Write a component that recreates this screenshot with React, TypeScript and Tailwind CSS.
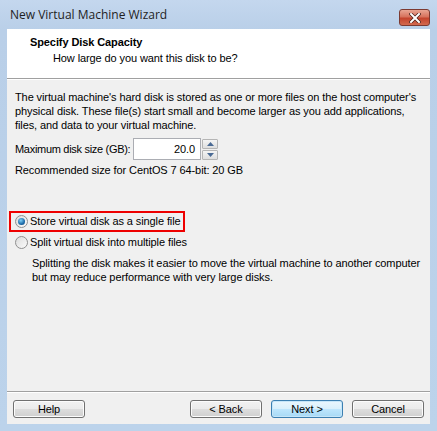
import React from 'react'

const body = "font-['Liberation_Sans',Arial,sans-serif] text-[11px] tracking-[-0.1px] text-black"

const Radio = ({ checked }: { checked?: boolean }) => (
  <span className="relative w-[13px] h-[13px] rounded-full border border-[#8f8f8f] bg-gradient-to-br from-[#dcdcdc] to-[#fbfbfb] flex items-center justify-center shrink-0">
    {checked && (
      <span className="w-[7px] h-[7px] rounded-full bg-[radial-gradient(circle_at_40%_35%,#7fd0f6,#1b6aa8_60%,#0c3f73)]" />
    )}
  </span>
)

const Btn = ({ label, primary }: { label: string; primary?: boolean }) => (
  <button
    className={
      'w-[72px] h-[18px] rounded-[3px] border flex items-center justify-center text-[11px] ' +
      (primary
        ? 'border-[#3c7fb1] bg-[linear-gradient(#eaf6fd,#d9f0fc_50%,#bee6fd_50%,#a7d9f5)] shadow-[inset_0_0_0_1px_#c6e6f9]'
        : 'border-[#707070] bg-[linear-gradient(#f2f2f2,#ebebeb_50%,#dddddd_50%,#cfcfcf)] shadow-[inset_0_0_0_1px_#fcfcfc]')
    }
  >
    {label}
  </button>
)

const Arrow = ({ up }: { up?: boolean }) => (
  <svg width="7" height="4" viewBox="0 0 7 4">
    <path d={up ? 'M0 4 L3.5 0 L7 4 Z' : 'M0 0 L3.5 4 L7 0 Z'} fill="#4a6a94" />
  </svg>
)

export default function App() {
  return (
    <div className="w-[437px] h-[431px] bg-[linear-gradient(#c4d7ee,#b9cfe8_30px,#bcd3eb)] flex flex-col overflow-hidden">
      {/* title bar */}
      <div className="h-[29px] flex items-start justify-between pl-[10px] pr-[7px]">
        <span className="mt-[6px] font-['Open_Sans',sans-serif] text-[12px] text-[#1e1e1e]">New Virtual Machine Wizard</span>
        <div className="mt-[9px] w-[31px] h-[17px] rounded-[3px] border border-[#7c3a31] bg-[linear-gradient(#e9a593,#d7735d_45%,#c4442d_55%,#d26a4f)] flex items-center justify-center">
          <svg width="12" height="10" viewBox="0 0 12 10">
            <path d="M2 1 L10 9 M10 1 L2 9" stroke="#4a1f18" strokeWidth="3.4" strokeLinecap="square" />
            <path d="M2 1 L10 9 M10 1 L2 9" stroke="#ffffff" strokeWidth="2" strokeLinecap="square" />
          </svg>
        </div>
      </div>

      {/* client */}
      <div className={`mx-[7px] mb-[7px] flex-1 bg-[#f0f0f0] flex flex-col ${body}`}>
        <div className="h-[50px] bg-white border-b border-[#a0a0a0] shadow-[0_1px_0_#ffffff] pl-[23px] pt-[6px]">
          <div className="font-bold leading-[14px]">Specify Disk Capacity</div>
          <div className="pl-[23px] leading-[14px] mt-[2px]">How large do you want this disk to be?</div>
        </div>

        <div className="px-[8px] pt-[11px] flex-1 whitespace-nowrap">
          <p className="leading-[14px]">
            The virtual machine's hard disk is stored as one or more files on the host computer's
            <br />
            physical disk. These file(s) start small and become larger as you add applications,
            <br />
            files, and data to your virtual machine.
          </p>

          <div className="flex items-center mt-[6px]">
            <span className="w-[118px] shrink-0 tracking-[-0.3px]">Maximum disk size (GB):</span>
            <div className="w-[68px] h-[22px] border border-[#abadb3] bg-white flex items-center justify-end pr-[5px]">20.0</div>
            <div className="flex flex-col ml-[1px] gap-[1px]">
              <div className="w-[16px] h-[10px] border border-[#b5b5b5] rounded-[1px] bg-[linear-gradient(#f4f4f4,#dedede)] flex items-center justify-center"><Arrow up /></div>
              <div className="w-[16px] h-[10px] border border-[#b5b5b5] rounded-[1px] bg-[linear-gradient(#f4f4f4,#dedede)] flex items-center justify-center"><Arrow /></div>
            </div>
          </div>

          <div className="mt-[3px] leading-[14px]">Recommended size for CentOS 7 64-bit: 20 GB</div>

          <div className="mt-[34px] -ml-[6px] w-[176px] h-[21px] border-2 border-[#ee0000] flex items-center gap-[2px] pl-[4px]">
            <Radio checked />
            <span>Store virtual disk as a single file</span>
          </div>

          <div className="flex items-center gap-[2px] mt-[2px] h-[17px]">
            <Radio />
            <span>Split virtual disk into multiple files</span>
          </div>

          <p className="pl-[17px] mt-[5px] leading-[14px]">
            Splitting the disk makes it easier to move the virtual machine to another computer
            <br />
            but may reduce performance with very large disks.
          </p>
        </div>

        <div className="h-[33px] border-t border-[#a0a0a0] shadow-[inset_0_1px_0_#ffffff] flex items-start pt-[8px] pl-[6px] pr-[6px]">
          <Btn label="Help" />
          <div className="flex-1" />
          <div className="flex gap-[9px]">
            <Btn label="< Back" />
            <Btn label="Next >" primary />
            <Btn label="Cancel" />
          </div>
        </div>
      </div>
    </div>
  )
}
